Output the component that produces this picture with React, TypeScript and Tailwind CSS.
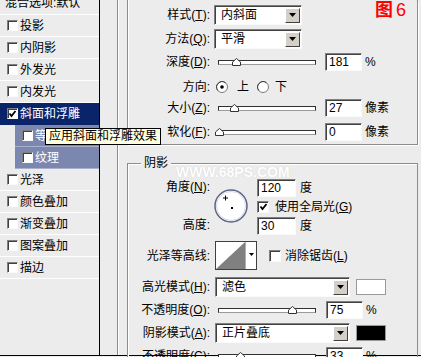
import React from 'react';

const FONT = '"Liberation Sans","Noto Sans CJK SC",sans-serif';
const sunken =
  'border border-t-[#808080] border-l-[#808080] border-b-[#fafafa] border-r-[#fafafa] shadow-[inset_1px_1px_0_#404040]';

function Check({ on, big }: { on?: boolean; big?: boolean }) {
  return (
    <span
      className={`flex shrink-0 items-center justify-center bg-white ${sunken} ${big ? 'h-[12px] w-[12px]' : 'h-[11px] w-[11px]'}`}
    >
      {on ? (
        <svg width="9" height="8" viewBox="0 0 9 8">
          <path d="M1.5 3.5L3.5 6L7.5 1" fill="none" stroke="#000" strokeWidth="1.8" />
        </svg>
      ) : null}
    </span>
  );
}

function Radio({ on }: { on?: boolean }) {
  return (
    <svg width="12" height="12" viewBox="0 0 12 12" className="shrink-0">
      <circle cx="6" cy="6" r="5.5" fill="#fff" stroke="#7a7a7a" />
      <path d="M1.8 9.5A5.5 5.5 0 0 1 9.5 1.8" fill="none" stroke="#404040" />
      {on ? <circle cx="6" cy="6" r="1.8" fill="#000" /> : null}
    </svg>
  );
}

function Select({ value, wide }: { value: string; wide?: boolean }) {
  return (
    <div className={`flex h-[20px] items-center bg-white ${sunken} ${wide ? 'w-[135px]' : 'w-[88px]'}`}>
      <span className="flex-1 pl-[6px] leading-none">{value}</span>
      <span className="mr-[1px] flex h-[15px] w-[15px] items-center justify-center border border-t-white border-l-white border-b-[#404040] border-r-[#404040] bg-[#d4d0c8]">
        <svg width="7" height="4" viewBox="0 0 7 4">
          <path d="M0 0H7L3.5 4Z" fill="#000" />
        </svg>
      </span>
    </div>
  );
}

function Field({ v, wide }: { v: string; wide?: boolean }) {
  return (
    <div className={`flex h-[18px] items-center bg-white pl-[3px] leading-none ${sunken} ${wide ? 'w-[39px]' : 'w-[37px]'}`}>
      {v}
    </div>
  );
}

function Slider({ pct }: { pct: number }) {
  return (
    <div className="relative ml-[8px] h-[20px] w-[98px] shrink-0">
      <div className="mt-[8px] h-[5px] border border-[#303030] border-b-[#9a9a9a] bg-white" />
      <svg
        className="absolute top-[6px]"
        style={{ left: `calc(${pct}% - 4px)` }}
        width="9"
        height="8"
        viewBox="0 0 9 8"
      >
        <path d="M4.5 0.5L8.5 4V7.5H0.5V4Z" fill="#fff" stroke="#333" />
      </svg>
    </div>
  );
}

function Label({ children }: { children: React.ReactNode }) {
  return <span className="w-[82px] shrink-0 text-right leading-none">{children}</span>;
}

function U({ c }: { c: string }) {
  return <span className="underline underline-offset-1">{c}</span>;
}

function ListRow({ name, on }: { name: string; on?: boolean }) {
  return (
    <div className="flex h-[22px] items-center border-b border-white pl-[7px]">
      <Check on={on} />
      <span className="ml-[2px] leading-none">{name}</span>
    </div>
  );
}

export default function App() {
  return (
    <div className="relative h-[357px] w-[421px] overflow-hidden bg-[#ececec] text-[12px] text-black" style={{ fontFamily: FONT }}>
      <div className="flex h-[356px] border-b border-black">
        {/* effects list */}
        <div className="w-[100px] shrink-0 border-r border-black">
          <div className="h-[15px] overflow-hidden border-b border-white px-[5px]">
            <div className="-mt-[3px] leading-[12px]">混合选项:默认</div>
          </div>
          {['投影', '内阴影', '外发光', '内发光'].map((n) => (
            <ListRow key={n} name={n} />
          ))}
          <div className="flex h-[22px] items-center border-b border-[#0a246a] bg-[#0a246a] pl-[7px] text-white">
            <Check on />
            <span className="ml-[2px] leading-none">斜面和浮雕</span>
          </div>
          {['等高线', '纹理'].map((n) => (
            <div key={n} className="ml-[15px] flex h-[22px] items-center border-b border-[#a9b0cc] bg-[#7c87b0] pl-[7px] text-white">
              <Check />
              <span className="ml-[2px] leading-none">{n}</span>
            </div>
          ))}
          {['光泽', '颜色叠加', '渐变叠加', '图案叠加', '描边'].map((n) => (
            <ListRow key={n} name={n} />
          ))}
        </div>

        {/* settings */}
        <div className="flex-1 pl-[17px]">
          <div className="h-full border-l border-[#8c8c8c] pl-[9px] shadow-[inset_1px_0_0_#fff]">
            {/* structure */}
            <div className="h-[145px] w-[291px] border border-t-0 border-[#8c8c8c] pt-[5px] shadow-[inset_1px_0_0_#fff,1px_1px_0_#fff]">
              <div className="flex h-[20px] items-center">
                <Label>样式(<U c="T" />):</Label>
                <div className="ml-[4px]"><Select value="内斜面" /></div>
              </div>
              <div className="mt-[4px] flex h-[20px] items-center">
                <Label>方法(<U c="Q" />):</Label>
                <div className="ml-[4px]"><Select value="平滑" /></div>
              </div>
              <div className="mt-[3px] flex h-[20px] items-center">
                <Label>深度(<U c="D" />):</Label>
                <Slider pct={18.5} />
                <div className="ml-[9px]"><Field v="181" /></div>
                <span className="ml-[3px] leading-none">%</span>
              </div>
              <div className="mt-[5px] flex h-[20px] items-center">
                <Label>方向:</Label>
                <span className="ml-[6px]"><Radio on /></span>
                <span className="ml-[9px] leading-none">上</span>
                <span className="ml-[8px]"><Radio /></span>
                <span className="ml-[6px] leading-none">下</span>
              </div>
              <div className="mt-[1px] flex h-[20px] items-center">
                <Label>大小(<U c="Z" />):</Label>
                <Slider pct={16.5} />
                <div className="ml-[9px]"><Field v="27" /></div>
                <span className="ml-[3px] leading-none">像素</span>
              </div>
              <div className="mt-[4px] flex h-[20px] items-center">
                <Label>软化(<U c="F" />):</Label>
                <Slider pct={1} />
                <div className="ml-[9px]"><Field v="0" /></div>
                <span className="ml-[3px] leading-none">像素</span>
              </div>
            </div>

            {/* shading */}
            <div className="relative mt-[18px] w-[291px] border border-b-0 border-[#8c8c8c] pt-[14px] shadow-[inset_1px_1px_0_#fff]">
              <span className="absolute -top-[9px] left-[13px] bg-[#ececec] px-[3px] leading-[16px]">阴影</span>

              <div className="flex h-[57px]">
                <div className="flex w-[82px] shrink-0 flex-col justify-between text-right">
                  <div className="h-[19px] leading-[19px]">角度(<U c="N" />):</div>
                  <div className="h-[19px] leading-[19px]">高度:</div>
                </div>
                <svg className="ml-[4px] mt-[11px] shrink-0" width="34" height="34" viewBox="0 0 34 34">
                  <circle cx="17" cy="17" r="16" fill="#fff" stroke="#5d6487" strokeWidth="1.5" />
                  <circle cx="17" cy="17" r="14.5" fill="none" stroke="#d5d8e6" />
                  <path d="M11.5 6.5V11.5M9 9H14" stroke="#000" />
                  <rect x="17" y="18" width="2" height="2" fill="#000" />
                </svg>
                <div className="ml-[9px] flex flex-col">
                  <div className="flex h-[19px] items-center">
                    <Field v="120" wide />
                    <span className="ml-[4px] leading-none">度</span>
                  </div>
                  <div className="flex h-[19px] items-center">
                    <Check on big />
                    <span className="ml-[6px] leading-none">使用全局光(<U c="G" />)</span>
                  </div>
                  <div className="flex h-[19px] items-center">
                    <Field v="30" wide />
                    <span className="ml-[4px] leading-none">度</span>
                  </div>
                </div>
              </div>

              <div className="mt-[6px] flex h-[29px] items-center">
                <Label>光泽等高线:</Label>
                <div className="ml-[5px] flex h-[29px] w-[42px] border border-[#404040] bg-white">
                  <svg width="29" height="27" viewBox="0 0 29 27" className="shrink-0">
                    <polygon points="0,27 29,0 29,27" fill="#808080" />
                  </svg>
                  <div className="flex flex-1 justify-center border-l border-[#b0b0b0] pt-[11px]">
                    <svg width="5" height="3" viewBox="0 0 5 3">
                      <path d="M0 0H5L2.5 3Z" fill="#000" />
                    </svg>
                  </div>
                </div>
                <span className="ml-[12px]"><Check big /></span>
                <span className="ml-[4px] leading-none">消除锯齿(<U c="L" />)</span>
              </div>

              <div className="mt-[7px] flex h-[20px] items-center">
                <Label>高光模式(<U c="H" />):</Label>
                <div className="ml-[5px]"><Select value="滤色" wide /></div>
                <div className="ml-[6px] h-[16px] w-[30px] border border-[#9a9a9a] bg-white" />
              </div>
              <div className="mt-[3px] flex h-[20px] items-center">
                <Label>不透明度(<U c="O" />):</Label>
                <Slider pct={75} />
                <div className="ml-[10px]"><Field v="75" /></div>
                <span className="ml-[3px] leading-none">%</span>
              </div>
              <div className="mt-[3px] flex h-[20px] items-center">
                <Label>阴影模式(<U c="A" />):</Label>
                <div className="ml-[5px]"><Select value="正片叠底" wide /></div>
                <div className="ml-[6px] h-[16px] w-[30px] border border-[#9a9a9a] bg-black" />
              </div>
              <div className="mt-[3px] flex h-[20px] items-center">
                <Label>不透明度(<U c="C" />):</Label>
                <Slider pct={22} />
                <div className="ml-[10px]"><Field v="33" /></div>
                <span className="ml-[3px] leading-none">%</span>
              </div>
            </div>
          </div>
        </div>
      </div>

      {/* overlays */}
      <div className="absolute left-[45px] top-[128px] h-[17px] border border-black bg-[#ffffe1] px-[3px] leading-[15px]">
        应用斜面和浮雕效果
      </div>
      <div className="absolute left-[375px] top-[1px] flex items-baseline text-[18px] leading-[18px] text-[#ff0000]">
        <span className="font-bold">图</span>
        <span className="ml-[3px]">6</span>
      </div>
      <div className="absolute left-[176px] top-[165px] text-[14px] font-bold leading-[15px] text-white [text-shadow:0_0_1px_#c8c8c8]">
        WWW.68PS.COM
      </div>
    </div>
  );
}
